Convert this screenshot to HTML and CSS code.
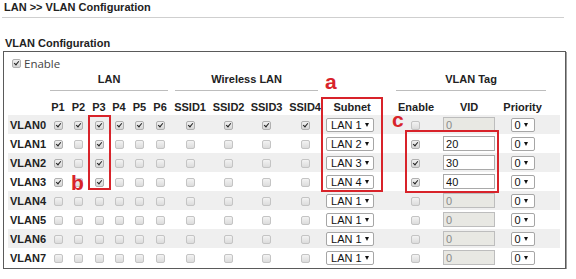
FILE: index.html
```html
<!DOCTYPE html>
<html lang="en">
<head>
  <meta charset="UTF-8">
  <title>LAN &gt;&gt; VLAN Configuration</title>
  <link rel="stylesheet" href="styles.css">
</head>
<body>
  <div class="crumb">LAN &gt;&gt; VLAN Configuration</div>
  <h2 class="section">VLAN Configuration</h2>

  <div class="panel">
    <label class="enable"><input type="checkbox" class="cb" checked> Enable</label>

    <table class="vlan">
      <colgroup>
        <col style="width:40px">
        <col style="width:20px"><col style="width:21px"><col style="width:20px">
        <col style="width:20px"><col style="width:21px"><col style="width:20px">
        <col style="width:40px"><col style="width:37px"><col style="width:39px"><col style="width:38px">
        <col style="width:56px">
        <col style="width:60px">
        <col style="width:60px">
        <col style="width:45px">
        <col style="width:15px">
      </colgroup>
      <thead>
        <tr class="groups">
          <th></th>
          <th colspan="6"><span class="grp grp-lan">LAN</span></th>
          <th colspan="4"><span class="grp grp-wlan">Wireless LAN</span></th>
          <th></th>
          <th colspan="3"><span class="grp grp-tag">VLAN Tag</span></th>
          <th></th>
        </tr>
        <tr class="cols">
          <th></th>
          <th>P1</th><th>P2</th><th>P3</th><th>P4</th><th>P5</th><th>P6</th>
          <th>SSID1</th><th>SSID2</th><th>SSID3</th><th>SSID4</th>
          <th>Subnet</th>
          <th class="c-en">Enable</th>
          <th class="c-vid">VID</th>
          <th>Priority</th>
          <th></th>
        </tr>
      </thead>
      <tbody>
        <tr>
          <th class="name">VLAN0</th>
          <td><input type="checkbox" class="cb" checked></td><td><input type="checkbox" class="cb" checked></td><td><input type="checkbox" class="cb" checked></td>
          <td><input type="checkbox" class="cb" checked></td><td><input type="checkbox" class="cb" checked></td><td><input type="checkbox" class="cb" checked></td>
          <td><input type="checkbox" class="cb" checked></td><td><input type="checkbox" class="cb" checked></td><td><input type="checkbox" class="cb" checked></td><td><input type="checkbox" class="cb" checked></td>
          <td class="c-sub"><span class="sel sel-lan">LAN 1</span></td>
          <td class="c-en"><input type="checkbox" class="cb"></td>
          <td class="c-vid"><input type="text" class="vid" value="0" disabled></td>
          <td><span class="sel sel-pri">0</span></td>
          <td></td>
        </tr>
        <tr>
          <th class="name">VLAN1</th>
          <td><input type="checkbox" class="cb" checked></td><td><input type="checkbox" class="cb"></td><td><input type="checkbox" class="cb" checked></td>
          <td><input type="checkbox" class="cb"></td><td><input type="checkbox" class="cb"></td><td><input type="checkbox" class="cb"></td>
          <td><input type="checkbox" class="cb"></td><td><input type="checkbox" class="cb"></td><td><input type="checkbox" class="cb"></td><td><input type="checkbox" class="cb"></td>
          <td class="c-sub"><span class="sel sel-lan">LAN 2</span></td>
          <td class="c-en"><input type="checkbox" class="cb" checked></td>
          <td class="c-vid"><input type="text" class="vid" value="20"></td>
          <td><span class="sel sel-pri">0</span></td>
          <td></td>
        </tr>
        <tr>
          <th class="name">VLAN2</th>
          <td><input type="checkbox" class="cb" checked></td><td><input type="checkbox" class="cb"></td><td><input type="checkbox" class="cb" checked></td>
          <td><input type="checkbox" class="cb"></td><td><input type="checkbox" class="cb"></td><td><input type="checkbox" class="cb"></td>
          <td><input type="checkbox" class="cb"></td><td><input type="checkbox" class="cb"></td><td><input type="checkbox" class="cb"></td><td><input type="checkbox" class="cb"></td>
          <td class="c-sub"><span class="sel sel-lan">LAN 3</span></td>
          <td class="c-en"><input type="checkbox" class="cb" checked></td>
          <td class="c-vid"><input type="text" class="vid" value="30"></td>
          <td><span class="sel sel-pri">0</span></td>
          <td></td>
        </tr>
        <tr>
          <th class="name">VLAN3</th>
          <td><input type="checkbox" class="cb" checked></td><td><input type="checkbox" class="cb"></td><td><input type="checkbox" class="cb" checked></td>
          <td><input type="checkbox" class="cb"></td><td><input type="checkbox" class="cb"></td><td><input type="checkbox" class="cb"></td>
          <td><input type="checkbox" class="cb"></td><td><input type="checkbox" class="cb"></td><td><input type="checkbox" class="cb"></td><td><input type="checkbox" class="cb"></td>
          <td class="c-sub"><span class="sel sel-lan">LAN 4</span></td>
          <td class="c-en"><input type="checkbox" class="cb" checked></td>
          <td class="c-vid"><input type="text" class="vid" value="40"></td>
          <td><span class="sel sel-pri">0</span></td>
          <td></td>
        </tr>
        <tr>
          <th class="name">VLAN4</th>
          <td><input type="checkbox" class="cb"></td><td><input type="checkbox" class="cb"></td><td><input type="checkbox" class="cb"></td>
          <td><input type="checkbox" class="cb"></td><td><input type="checkbox" class="cb"></td><td><input type="checkbox" class="cb"></td>
          <td><input type="checkbox" class="cb"></td><td><input type="checkbox" class="cb"></td><td><input type="checkbox" class="cb"></td><td><input type="checkbox" class="cb"></td>
          <td class="c-sub"><span class="sel sel-lan">LAN 1</span></td>
          <td class="c-en"><input type="checkbox" class="cb"></td>
          <td class="c-vid"><input type="text" class="vid" value="0" disabled></td>
          <td><span class="sel sel-pri">0</span></td>
          <td></td>
        </tr>
        <tr>
          <th class="name">VLAN5</th>
          <td><input type="checkbox" class="cb"></td><td><input type="checkbox" class="cb"></td><td><input type="checkbox" class="cb"></td>
          <td><input type="checkbox" class="cb"></td><td><input type="checkbox" class="cb"></td><td><input type="checkbox" class="cb"></td>
          <td><input type="checkbox" class="cb"></td><td><input type="checkbox" class="cb"></td><td><input type="checkbox" class="cb"></td><td><input type="checkbox" class="cb"></td>
          <td class="c-sub"><span class="sel sel-lan">LAN 1</span></td>
          <td class="c-en"><input type="checkbox" class="cb"></td>
          <td class="c-vid"><input type="text" class="vid" value="0" disabled></td>
          <td><span class="sel sel-pri">0</span></td>
          <td></td>
        </tr>
        <tr>
          <th class="name">VLAN6</th>
          <td><input type="checkbox" class="cb"></td><td><input type="checkbox" class="cb"></td><td><input type="checkbox" class="cb"></td>
          <td><input type="checkbox" class="cb"></td><td><input type="checkbox" class="cb"></td><td><input type="checkbox" class="cb"></td>
          <td><input type="checkbox" class="cb"></td><td><input type="checkbox" class="cb"></td><td><input type="checkbox" class="cb"></td><td><input type="checkbox" class="cb"></td>
          <td class="c-sub"><span class="sel sel-lan">LAN 1</span></td>
          <td class="c-en"><input type="checkbox" class="cb"></td>
          <td class="c-vid"><input type="text" class="vid" value="0" disabled></td>
          <td><span class="sel sel-pri">0</span></td>
          <td></td>
        </tr>
        <tr>
          <th class="name">VLAN7</th>
          <td><input type="checkbox" class="cb"></td><td><input type="checkbox" class="cb"></td><td><input type="checkbox" class="cb"></td>
          <td><input type="checkbox" class="cb"></td><td><input type="checkbox" class="cb"></td><td><input type="checkbox" class="cb"></td>
          <td><input type="checkbox" class="cb"></td><td><input type="checkbox" class="cb"></td><td><input type="checkbox" class="cb"></td><td><input type="checkbox" class="cb"></td>
          <td class="c-sub"><span class="sel sel-lan">LAN 1</span></td>
          <td class="c-en"><input type="checkbox" class="cb"></td>
          <td class="c-vid"><input type="text" class="vid" value="0" disabled></td>
          <td><span class="sel sel-pri">0</span></td>
          <td></td>
        </tr>
      </tbody>
    </table>

    <!-- red callouts drawn over the table -->
    <div class="mark mark-a"></div>
    <div class="mark mark-b"></div>
    <div class="mark mark-c"></div>
    <span class="tag tag-a">a</span>
    <span class="tag tag-b">b</span>
    <span class="tag tag-c">c</span>
  </div>
</body>
</html>
```

FILE: styles.css
```css
/* Base */
body {
  margin: 0;
  font-family: 'Liberation Sans', Arial, sans-serif;
  color: #222;
  background: #fff;
}

.crumb {
  margin: 0 12px 0 2px;
  padding: 0 0 3px 2px;
  font-size: 11px;
  font-weight: bold;
  line-height: 14px;
  border-bottom: 1px solid #cfcfcf;
}

.section {
  margin: 18px 0 1px;
  padding-left: 5px;
  font-size: 11px;
  line-height: 14px;
  font-weight: bold;
}

/* Panel */
.panel {
  position: relative;
  box-sizing: border-box;
  width: 563px;
  margin-left: 3px;
  padding: 0 5px 1px 4px;
  border: 1px solid #5a5a5a;
  box-shadow: 1px 1px 0 #a0a0a0;
}

.enable {
  display: flex;
  align-items: center;
  gap: 3px;
  height: 18px;
  padding: 2px 0 0 4px;
  font-family: 'Open Sans', 'Noto Sans', sans-serif;
  font-size: 11.5px;
  color: #444;
}

/* Checkboxes */
.cb {
  appearance: none;
  -webkit-appearance: none;
  position: relative;
  box-sizing: border-box;
  width: 9px;
  height: 9px;
  margin: 0;
  vertical-align: middle;
  border: 1px solid #c4c4c4;
  border-radius: 2px;
  background: linear-gradient(#f3f3f3, #dcdcdc);
}

.cb:checked {
  border-color: #b0b0b0;
  background: linear-gradient(#f0f0f0, #d6d6d6);
}

.cb:checked::after {
  content: "";
  position: absolute;
  left: 2px;
  top: 0;
  width: 2px;
  height: 4px;
  border-right: 1.5px solid #222;
  border-bottom: 1.5px solid #222;
  transform: rotate(40deg);
}

/* Table */
.vlan {
  width: 552px;
  table-layout: fixed;
  border-collapse: collapse;
  border-spacing: 0;
}

.vlan th,
.vlan td {
  padding: 0;
  text-align: center;
  font-size: 11px;
  line-height: 14px;
}

.groups th {
  height: 22px;
  vertical-align: top;
}

.grp {
  display: block;
  padding-bottom: 4px;
  border-bottom: 1px solid #bdbdbd;
}

.grp-lan { margin: 0 2px; }
.grp-wlan { margin: 0 6px 0 5px; }
.grp-tag { margin: 0 -1px 0 16px; }

.cols th {
  height: 20px;
  padding-bottom: 1px;
  vertical-align: bottom;
}

.cols th.c-en { padding-left: 12px; }
.cols th.c-vid { padding-right: 2px; }

.vlan tbody tr {
  height: 19px;
}

.vlan tbody tr:nth-child(odd) {
  background: #efefef;
}

.vlan .name {
  padding-left: 2px;
  text-align: left;
}

.vlan td.c-en { padding-left: 10px; }
.vlan td.c-sub { padding-right: 4px; }
.vlan td.c-vid { padding-right: 2px; }

/* Select look-alikes */
.sel {
  display: inline-flex;
  align-items: center;
  box-sizing: border-box;
  height: 14px;
  padding-left: 4px;
  vertical-align: middle;
  font-weight: normal;
  font-size: 11px;
  line-height: 12px;
  color: #111;
  background: #fff;
  border: 1px solid #a6a6a6;
  border-radius: 2px;
}

.sel::after {
  content: "";
  margin-left: 3px;
  border-left: 2.5px solid transparent;
  border-right: 2.5px solid transparent;
  border-top: 4px solid #111;
}

.sel-lan { width: 48px; }
.sel-pri { width: 24px; padding-left: 3px; }

.vid {
  box-sizing: border-box;
  width: 52px;
  height: 15px;
  margin: 0;
  padding: 0 2px;
  vertical-align: middle;
  font-family: 'Liberation Sans', Arial, sans-serif;
  font-size: 11px;
  color: #111;
  background: #fff;
  border: 1px solid #a9a9a9;
  border-radius: 0;
}

.vid:disabled {
  color: #8a8a8a;
  background: #e8e8e3;
  border-color: #bdbdbd;
}

/* Red callouts */
.mark {
  position: absolute;
  box-sizing: border-box;
  border: 2px solid #d8232a;
}

.mark-a { left: 317px; top: 45px; width: 62px; height: 95px; }
.mark-b { left: 84px; top: 63px; width: 23px; height: 75px; }
.mark-c { left: 401px; top: 78px; width: 94px; height: 63px; }

.tag {
  position: absolute;
  font-size: 21px;
  line-height: 12px;
  font-weight: bold;
  color: #d8232a;
}

.tag-a { left: 321px; top: 24px; }
.tag-b { left: 67px; top: 125px; }
.tag-c { left: 388px; top: 62px; }
```
